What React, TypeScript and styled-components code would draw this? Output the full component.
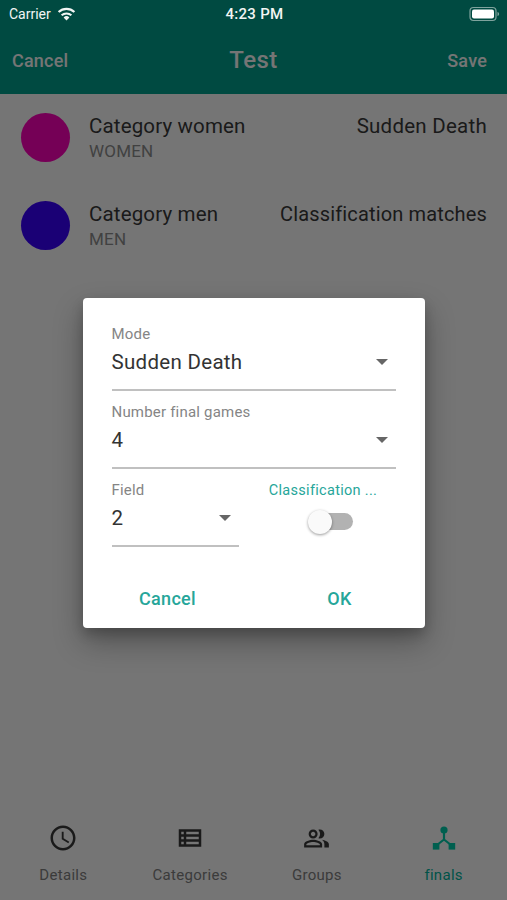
import React from 'react';
import styled, { createGlobalStyle } from 'styled-components';
import { MdOutlineAccessTime, MdOutlinePeopleAlt, MdOutlineViewList } from 'react-icons/md';

const GlobalStyle = createGlobalStyle`
  html, body {
    margin: 0;
    padding: 0;
    background: #fff;
    font-family: Roboto, "Liberation Sans", sans-serif;
  }
`

const Screen = styled.div`
  position: relative;
  width: 507px;
  height: 900px;
  overflow: hidden;
  display: flex;
  flex-direction: column;
  background: #fff;
`
const Header = styled.header`
  height: 94px;
  background: #00a18e;
  display: flex;
  flex-direction: column;
`
const StatusBar = styled.div`
  position: relative;
  z-index: 3;
  height: 28px;
  display: grid;
  grid-template-columns: 1fr auto 1fr;
  align-items: center;
  padding: 0 7px 0 9px;
  color: #f2f5f4;
  font-size: 14px;
`
const Carrier = styled.div`
  display: flex;
  align-items: center;
  gap: 6px;
`
const Clock = styled.div`
  font-weight: 500;
  font-size: 15px;
  letter-spacing: 0.3px;
`
const Battery = styled.div`
  justify-self: end;
  display: flex;
`
const Toolbar = styled.div`
  flex: 1;
  display: grid;
  grid-template-columns: 1fr auto 1fr;
  align-items: center;
  padding: 0 20px 2px;
  color: #fff;
`
const ToolbarAction = styled.span<{ $end?: boolean }>`
  font-size: 18px;
  font-weight: 500;
  letter-spacing: 0.2px;
  justify-self: ${p => (p.$end ? 'end' : 'start')};
  margin-left: ${p => (p.$end ? '0' : '-8px')};
`
const ToolbarTitle = styled.span`
  font-size: 24px;
  font-weight: 500;
  letter-spacing: 0.5px;
`
const List = styled.main`
  flex: 1;
  margin-top: -1px;
`
const Row = styled.div`
  height: 88px;
  display: flex;
  align-items: center;
  padding: 0 20px 0 21px;
`
const Avatar = styled.div<{ $color: string }>`
  width: 49px;
  height: 49px;
  border-radius: 50%;
  background: ${p => p.$color};
  margin-right: 19px;
`
const RowText = styled.div`
  flex: 1;
  display: flex;
  flex-direction: column;
  gap: 3px;
`
const RowTitle = styled.span`
  font-size: 20.5px;
  line-height: 24px;
  letter-spacing: 0.15px;
  color: #3a3a3a;
`
const RowSub = styled.span`
  font-size: 17px;
  line-height: 20px;
  letter-spacing: 0.2px;
  color: #8e8e8e;
`
const RowMode = styled(RowTitle)<{ $tight?: boolean }>`
  align-self: flex-start;
  margin-top: 21px;
  font-size: ${p => (p.$tight ? '20px' : '20.5px')};
  letter-spacing: ${p => (p.$tight ? '0.15px' : '0.25px')};
`
const TabBar = styled.nav`
  height: 91px;
  display: grid;
  grid-template-columns: repeat(4, 1fr);
  padding-top: 13px;
  box-sizing: border-box;
`
const Tab = styled.div<{ $active?: boolean }>`
  display: flex;
  flex-direction: column;
  align-items: center;
  color: ${p => (p.$active ? '#00b59e' : '#828282')};
  svg { display: block; }
`
const TabIcon = styled.div<{ $active?: boolean }>`
  height: 32px;
  display: flex;
  align-items: center;
  justify-content: center;
  color: ${p => (p.$active ? '#00cfad' : '#3a3a3a')};
`
const TabLabel = styled.span`
  margin-top: 12px;
  font-size: 15px;
  line-height: 18px;
  letter-spacing: 0.3px;
  color: inherit;
`
const Scrim = styled.div`
  position: absolute;
  inset: 0;
  z-index: 2;
  background: rgba(0, 0, 0, 0.54);
  display: flex;
  align-items: center;
  justify-content: center;
  padding-top: 26px;
  box-sizing: border-box;
`
const Dialog = styled.div`
  width: 342px;
  height: 330px;
  box-sizing: border-box;
  padding: 27px 29px 12px;
  background: #fff;
  border-radius: 4px;
  box-shadow: 0 14px 30px rgba(0, 0, 0, 0.3), 0 6px 12px rgba(0, 0, 0, 0.18);
  display: flex;
  flex-direction: column;
  gap: 12px;
`
const Field = styled.div`
  border-bottom: 2px solid #c0c0c0;
  padding-bottom: 8px;
`
const FieldLabel = styled.div`
  padding-top: 1px;
  font-size: 15px;
  line-height: 16px;
  letter-spacing: 0.2px;
  color: #858585;
`
const FieldValue = styled.div`
  height: 39px;
  display: flex;
  align-items: center;
  justify-content: space-between;
  padding-right: 8px;
  font-size: 20.5px;
  letter-spacing: 0.3px;
  color: #333;
`
const Caret = styled.span`
  width: 0;
  height: 0;
  border-left: 6px solid transparent;
  border-right: 6px solid transparent;
  border-top: 6px solid #666;
`
const BottomRow = styled.div`
  display: grid;
  grid-template-columns: 127px 1fr;
`
const SwitchColumn = styled.div`
  display: flex;
  flex-direction: column;
  align-items: center;
  padding-left: 12px;
`
const SwitchLabel = styled.div`
  padding-top: 2px;
  font-size: 14.5px;
  line-height: 16px;
  letter-spacing: 0.3px;
  color: #26a69a;
  white-space: nowrap;
`
const SwitchTrack = styled.div`
  position: relative;
  width: 33px;
  height: 17px;
  margin: 14px 0 0 27px;
  border-radius: 9px;
  background: #b2b2b2;
`
const SwitchThumb = styled.div`
  position: absolute;
  left: -12px;
  top: -3.5px;
  width: 24px;
  height: 24px;
  border-radius: 50%;
  background: #fafafa;
  box-shadow: 0 1px 3px rgba(0, 0, 0, 0.4);
`
const Actions = styled.div`
  margin-top: 21px;
  display: flex;
  justify-content: space-between;
`
const ActionButton = styled.button`
  width: 112px;
  height: 36px;
  border: 0;
  padding: 0;
  background: none;
  font-family: inherit;
  font-size: 18px;
  font-weight: 500;
  letter-spacing: 0.3px;
  color: #26a69a;
`

const WifiIcon = () => (
  <svg width="19" height="14" viewBox="0 0 19 14">
    <path d="M9.5 13.6 6.6 10.4a4.3 4.3 0 0 1 5.8 0z" fill="#f2f5f4" />
    <path d="M4.6 8.3a7.3 7.3 0 0 1 9.8 0" fill="none" stroke="#f2f5f4" strokeWidth="2" />
    <path d="M1.6 5a11.7 11.7 0 0 1 15.8 0" fill="none" stroke="#f2f5f4" strokeWidth="2.2" />
  </svg>
)

const BatteryIcon = () => (
  <svg width="31" height="16" viewBox="0 0 31 16">
    <rect x="1" y="1.5" width="26" height="13" rx="3.5" fill="none" stroke="#7fa39d" strokeWidth="1.2" />
    <rect x="3" y="3.5" width="22" height="9" rx="2" fill="#fff" />
    <path d="M28.5 6v4c1-.3 1.6-1 1.6-2s-.6-1.7-1.6-2z" fill="#7fa39d" />
  </svg>
)

const FinalsIcon = () => (
  <svg width="24" height="24" viewBox="0 0 24 24" fill="currentColor">
    <circle cx="12" cy="4" r="3.6" />
    <rect x="0.8" y="17" width="6.6" height="6.6" />
    <rect x="16.6" y="17" width="6.6" height="6.6" />
    <path d="M12 6v7.5M12 13.5 5 19M12 13.5 19 19" fill="none" stroke="currentColor" strokeWidth="2.2" />
  </svg>
)

const categories = [
  { name: 'Category women', sub: 'WOMEN', mode: 'Sudden Death', color: '#ff00bb' },
  { name: 'Category men', sub: 'MEN', mode: 'Classification matches', color: '#3a00ff', tight: true },
]

const App = () => {
  return (
    <Screen>
      <GlobalStyle />
      <Header>
        <StatusBar>
          <Carrier>Carrier <WifiIcon /></Carrier>
          <Clock>4:23 PM</Clock>
          <Battery><BatteryIcon /></Battery>
        </StatusBar>
        <Toolbar>
          <ToolbarAction>Cancel</ToolbarAction>
          <ToolbarTitle>Test</ToolbarTitle>
          <ToolbarAction $end>Save</ToolbarAction>
        </Toolbar>
      </Header>
      <List>
        {categories.map(c => (
          <Row key={c.name}>
            <Avatar $color={c.color} />
            <RowText>
              <RowTitle>{c.name}</RowTitle>
              <RowSub>{c.sub}</RowSub>
            </RowText>
            <RowMode $tight={c.tight}>{c.mode}</RowMode>
          </Row>
        ))}
      </List>
      <TabBar>
        <Tab>
          <TabIcon><MdOutlineAccessTime size={30} /></TabIcon>
          <TabLabel>Details</TabLabel>
        </Tab>
        <Tab>
          <TabIcon><MdOutlineViewList size={30} /></TabIcon>
          <TabLabel>Categories</TabLabel>
        </Tab>
        <Tab>
          <TabIcon><MdOutlinePeopleAlt size={27} /></TabIcon>
          <TabLabel>Groups</TabLabel>
        </Tab>
        <Tab $active>
          <TabIcon $active><FinalsIcon /></TabIcon>
          <TabLabel>finals</TabLabel>
        </Tab>
      </TabBar>
      <Scrim>
        <Dialog>
          <Field>
            <FieldLabel>Mode</FieldLabel>
            <FieldValue>Sudden Death <Caret /></FieldValue>
          </Field>
          <Field>
            <FieldLabel>Number final games</FieldLabel>
            <FieldValue>4 <Caret /></FieldValue>
          </Field>
          <BottomRow>
            <Field>
              <FieldLabel>Field</FieldLabel>
              <FieldValue>2 <Caret /></FieldValue>
            </Field>
            <SwitchColumn>
              <SwitchLabel>Classification ...</SwitchLabel>
              <SwitchTrack><SwitchThumb /></SwitchTrack>
            </SwitchColumn>
          </BottomRow>
          <Actions>
            <ActionButton>Cancel</ActionButton>
            <ActionButton>OK</ActionButton>
          </Actions>
        </Dialog>
      </Scrim>
    </Screen>
  )
}

export default App;
